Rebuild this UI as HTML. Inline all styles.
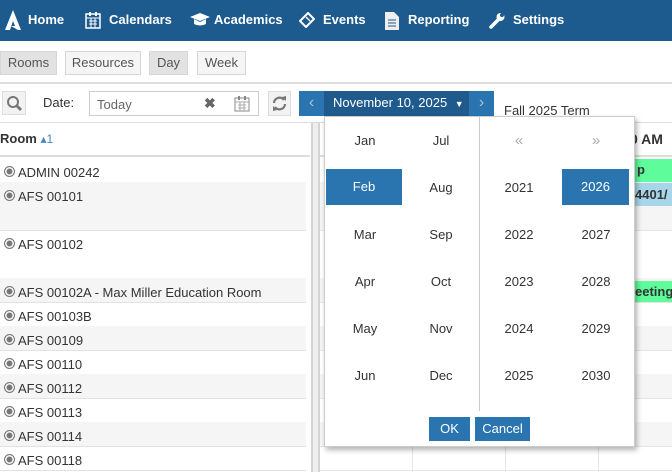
<!DOCTYPE html>
<html><head><meta charset="utf-8"><style>
*{box-sizing:border-box;margin:0;padding:0}
body{width:672px;height:472px;overflow:hidden;background:#fff;font-family:"Liberation Sans",sans-serif;color:#333;position:relative;font-size:13px}
.abs{position:absolute}
.nav{left:0;top:0;width:672px;height:41px;background:#1d5a8e}
.nav span{position:absolute;top:12px;color:#fff;font-weight:bold;font-size:13px}
.btn{position:absolute;top:51px;height:24px;border:1px solid #d6d6d6;font-size:13px;line-height:22px;text-align:center;color:#555}
.row{position:absolute;left:0;width:306px;border-bottom:1px solid #e2e2e2;font-size:13px;color:#333}
.row .t{position:absolute;left:4px;top:7px}
.row .t:before{content:"";display:inline-block;width:9px;height:9px;border:1.5px solid #777;border-radius:50%;margin-right:3px;vertical-align:0;box-shadow:inset 0 0 0 1.5px #fff;background:#777}
.g{background:#f5f5f5}
.grow{position:absolute;left:320px;width:352px;border-bottom:1px solid #e6e6e6}
.vl{position:absolute;top:156px;height:316px;width:1px;background:#e6e6e6}
.pop{left:324px;top:116px;width:311px;height:331px;background:#fff;border:1px solid #ccc;box-shadow:2px 3px 5px rgba(0,0,0,.3)}
.c{position:absolute;width:76px;height:36px;line-height:36px;text-align:center;font-size:13px;color:#333}
.sel{background:#2a74b0;color:#fff}
</style></head><body>
<div class="abs nav">
<svg class="abs" style="left:5px;top:10px" width="16" height="20" viewBox="0 0 16 20"><path d="M8 0L0 20H5L8 11L10 16H6L13 20H16Z" fill="#fff"/></svg>
<span style="left:28px">Home</span>
<svg class="abs" style="left:85px;top:11px" width="16" height="18" viewBox="0 0 16 18"><rect x="1" y="3" width="14" height="14" fill="none" stroke="#fff" stroke-width="1.5"/><path d="M1 7H15M4 10H12M4 13H12M6 7V17M10 7V17" stroke="#fff" stroke-width="1"/><rect x="4" y="1" width="2" height="4" fill="#fff"/><rect x="10" y="1" width="2" height="4" fill="#fff"/></svg>
<span style="left:109px">Calendars</span>
<svg class="abs" style="left:190px;top:13px" width="20" height="14" viewBox="0 0 20 14"><path d="M0 4L10 0L20 4L10 8Z" fill="#fff"/><path d="M4 6V11Q10 14 16 11V6L10 9Z" fill="#fff"/></svg>
<span style="left:214px">Academics</span>
<svg class="abs" style="left:299px;top:12px" width="16" height="16" viewBox="0 0 16 16"><path d="M9 1L15 7L7 15L1 9Z" fill="none" stroke="#fff" stroke-width="2"/><path d="M7 5L11 9" stroke="#fff" stroke-width="1.5"/></svg>
<span style="left:323px">Events</span>
<svg class="abs" style="left:385px;top:12px" width="14" height="18" viewBox="0 0 14 18"><path d="M0 0H9L14 5V18H0Z" fill="#eee"/><path d="M3 8H11M3 11H11M3 14H11" stroke="#1d5a8e"/></svg>
<span style="left:408px">Reporting</span>
<svg class="abs" style="left:489px;top:12px" width="16" height="17" viewBox="0 0 16 17"><path d="M2 15L9 8" stroke="#fff" stroke-width="3.5" stroke-linecap="round"/><circle cx="11.5" cy="5" r="4" fill="#fff"/><circle cx="13" cy="3" r="2" fill="#1d5a8e"/></svg>
<span style="left:513px">Settings</span>
</div>
<div class="btn" style="left:0;width:57px;background:#e2e2e2">Rooms</div>
<div class="btn" style="left:65px;width:76px;background:#f5f5f5">Resources</div>
<div class="btn" style="left:149px;width:39px;background:#e2e2e2">Day</div>
<div class="btn" style="left:197px;width:49px;background:#f5f5f5">Week</div>
<div class="abs" style="left:0;top:82px;width:672px;height:2px;background:#ddd"></div>
<div class="abs" style="left:2px;top:91px;width:24px;height:24px;border:1px solid #ddd;background:#f2f2f2"><svg width="22" height="22" viewBox="0 0 22 22"><circle cx="10" cy="10" r="5" fill="none" stroke="#777" stroke-width="2"/><path d="M14 14L18 18" stroke="#777" stroke-width="3"/></svg></div>
<div class="abs" style="left:43px;top:95px;font-size:13px;color:#333">Date:</div>
<div class="abs" style="left:89px;top:91px;width:170px;height:25px;border:1px solid #ccc"><span class="abs" style="left:7px;top:5px;color:#666;font-size:13px">Today</span><span class="abs" style="left:114px;top:3px;color:#666;font-size:14px;font-weight:bold">✖</span><svg class="abs" style="left:144px;top:3px" width="16" height="17" viewBox="0 0 16 17"><rect x="1" y="3" width="14" height="13" fill="none" stroke="#888"/><path d="M1 7H15M4 10H12M4 13H12M6 7V16M10 7V16" stroke="#aaa"/><rect x="4" y="1" width="2" height="4" fill="#888"/><rect x="10" y="1" width="2" height="4" fill="#888"/></svg></div>
<div class="abs" style="left:268px;top:91px;width:23px;height:25px;border:1px solid #ddd;background:#f2f2f2"><svg width="21" height="23" viewBox="0 0 21 23"><path d="M5 11A5.5 5.5 0 0 1 15 8M16 12A5.5 5.5 0 0 1 6 15" fill="none" stroke="#777" stroke-width="2.2"/><path d="M13 5L17 9L17 4Z M8 18L4 14L4 19Z" fill="#777"/></svg></div>
<div class="abs" style="left:299px;top:91px;width:25px;height:25px;background:#2a74b0;color:#a9c4dd;font-size:16px;text-align:center;line-height:24px">‹</div>
<div class="abs" style="left:324px;top:91px;width:145px;height:25px;background:#1e5a8c;color:#fff;font-size:13px;line-height:24px;padding-left:9px">November 10, 2025 <span style="font-size:9px;margin-left:4px">▼</span></div>
<div class="abs" style="left:469px;top:91px;width:25px;height:25px;background:#2a74b0;color:#a9c4dd;font-size:16px;text-align:center;line-height:24px">›</div>
<div class="abs" style="left:504px;top:103px;font-size:13px">Fall 2025 Term</div>
<div class="abs" style="left:0;top:122px;width:672px;height:1px;background:#ddd"></div>
<div class="abs" style="left:0;top:131px;font-weight:bold;font-size:13px">Room <span style="color:#4a86c0;font-weight:normal;font-size:12px">▴1</span></div>
<div class="abs" style="left:0;top:155px;width:310px;height:2px;background:#ddd"></div>
<div class="abs" style="left:311px;top:123px;width:9px;height:349px;background:#eee;border-left:2px solid #d4d4d4;border-right:2px solid #d4d4d4"></div>
<div class="row" style="top:158px;height:25px"><span class="t">ADMIN 00242</span></div>
<div class="row g" style="top:182px;height:49px"><span class="t">AFS 00101</span></div>
<div class="row" style="top:230px;height:49px"><span class="t">AFS 00102</span></div>
<div class="row g" style="top:278px;height:25px"><span class="t">AFS 00102A - Max Miller Education Room</span></div>
<div class="row" style="top:302px;height:25px"><span class="t">AFS 00103B</span></div>
<div class="row g" style="top:326px;height:25px"><span class="t">AFS 00109</span></div>
<div class="row" style="top:350px;height:25px"><span class="t">AFS 00110</span></div>
<div class="row g" style="top:374px;height:25px"><span class="t">AFS 00112</span></div>
<div class="row" style="top:398px;height:25px"><span class="t">AFS 00113</span></div>
<div class="row g" style="top:422px;height:25px"><span class="t">AFS 00114</span></div>
<div class="row" style="top:446px;height:25px"><span class="t">AFS 00118</span></div>
<div class="abs" style="left:320px;top:155px;width:352px;height:2px;background:#ddd"></div>
<div class="grow" style="top:158px;height:25px"></div>
<div class="grow g" style="top:182px;height:49px"></div>
<div class="grow" style="top:230px;height:49px"></div>
<div class="grow g" style="top:278px;height:25px"></div>
<div class="grow" style="top:302px;height:25px"></div>
<div class="grow g" style="top:326px;height:25px"></div>
<div class="grow" style="top:350px;height:25px"></div>
<div class="grow g" style="top:374px;height:25px"></div>
<div class="grow" style="top:398px;height:25px"></div>
<div class="grow g" style="top:422px;height:25px"></div>
<div class="grow" style="top:446px;height:25px"></div>
<div class="vl" style="left:412px"></div><div class="vl" style="left:505px"></div><div class="vl" style="left:598px"></div>
<div class="abs" style="left:630px;top:131px;font-weight:bold;font-size:14px">0 AM</div>
<div class="abs" style="left:635px;top:159px;width:37px;height:23px;background:#5efc9a;font-weight:bold;padding-left:2px;line-height:21px">p</div>
<div class="abs" style="left:635px;top:183px;width:37px;height:23px;background:#a7d6ea;font-weight:bold;line-height:23px">4401/</div>
<div class="abs" style="left:635px;top:281px;width:37px;height:21px;background:#5efc9a;font-weight:bold;line-height:21px;white-space:nowrap">eeting</div>
<div class="abs pop">
<div class="abs" style="left:154px;top:0;width:1px;height:294px;background:#ccc"></div>
<div class="c" style="left:2px;top:6px">Jan</div><div class="c" style="left:78px;top:6px">Jul</div>
<div class="c" style="left:156px;top:6px;color:#aaa;font-size:15px">«</div><div class="c" style="left:233px;top:6px;color:#aaa;font-size:15px">»</div>
<div class="c sel" style="left:1px;top:52px">Feb</div><div class="c" style="left:78px;top:53px">Aug</div>
<div class="c" style="left:156px;top:53px">2021</div><div class="c sel" style="left:237px;top:52px;width:67px">2026</div>
<div class="c" style="left:2px;top:100px">Mar</div><div class="c" style="left:78px;top:100px">Sep</div><div class="c" style="left:156px;top:100px">2022</div><div class="c" style="left:233px;top:100px">2027</div>
<div class="c" style="left:2px;top:147px">Apr</div><div class="c" style="left:78px;top:147px">Oct</div><div class="c" style="left:156px;top:147px">2023</div><div class="c" style="left:233px;top:147px">2028</div>
<div class="c" style="left:2px;top:194px">May</div><div class="c" style="left:78px;top:194px">Nov</div><div class="c" style="left:156px;top:194px">2024</div><div class="c" style="left:233px;top:194px">2029</div>
<div class="c" style="left:2px;top:241px">Jun</div><div class="c" style="left:78px;top:241px">Dec</div><div class="c" style="left:156px;top:241px">2025</div><div class="c" style="left:233px;top:241px">2030</div>
<div class="abs" style="left:104px;top:300px;width:41px;height:24px;background:#2a74b0;color:#fff;text-align:center;line-height:24px">OK</div>
<div class="abs" style="left:150px;top:300px;width:55px;height:24px;background:#2a74b0;color:#fff;text-align:center;line-height:24px">Cancel</div>
</div>
</body></html>
